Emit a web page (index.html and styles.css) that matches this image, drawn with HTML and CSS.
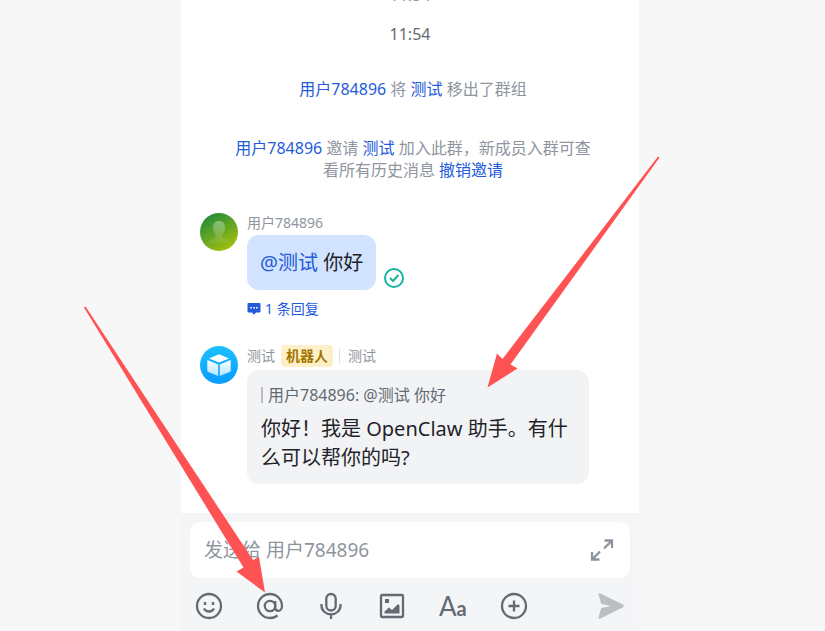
FILE: index.html
```html
<!DOCTYPE html>
<html lang="zh-CN">
<head>
    <meta charset="UTF-8">
    <meta name="viewport" content="width=device-width, initial-scale=1.0">
    <title>测试</title>
    <link rel="stylesheet" href="styles.css">
</head>
<body>
    <div class="chat">
        <main class="messages">
            <div class="earlier"><span>11:54</span></div>
            <time class="time">11:54</time>

            <p class="notice"><a href="#">用户784896</a> 将 <a href="#">测试</a> 移出了群组</p>
            <p class="notice"><a href="#">用户784896</a> 邀请 <a href="#">测试</a> 加入此群，新成员入群可查看所有历史消息 <a href="#">撤销邀请</a></p>

            <article class="message">
                <svg class="avatar" viewBox="0 0 38 38">
                    <defs>
                        <linearGradient id="green" x1="0.2" y1="0" x2="0.8" y2="1">
                            <stop offset="0" stop-color="#1f8a3a"/>
                            <stop offset="1" stop-color="#a8c20a"/>
                        </linearGradient>
                        <linearGradient id="person" x1="0" y1="0" x2="0" y2="1">
                            <stop offset="0" stop-color="#fff" stop-opacity="0.35"/>
                            <stop offset="1" stop-color="#fff" stop-opacity="0.06"/>
                        </linearGradient>
                    </defs>
                    <circle cx="19" cy="19" r="19" fill="url(#green)"/>
                    <path d="M19 8c4 0 6 2.500 6 6.500 0 3.500-1.200 5.500-2.700 7v3c2 1.600 6.500 2 8.700 5.500H7c2.200-3.500 6.700-3.900 8.700-5.500v-3c-1.500-1.500-2.700-3.500-2.700-7C13 10.500 15 8 19 8z" fill="url(#person)"/>
                </svg>
                <div class="content">
                    <div class="sender">用户784896</div>
                    <div class="row">
                        <div class="bubble mine"><a href="#">@测试</a> 你好</div>
                        <svg class="read" viewBox="0 0 22 22">
                            <circle cx="11" cy="10" r="9" fill="none" stroke="#12b5a0" stroke-width="2"/>
                            <path d="M7 10l3 3 5.500-6" fill="none" stroke="#12b5a0" stroke-width="2"/>
                        </svg>
                    </div>
                    <a class="replies" href="#">
                        <svg viewBox="0 0 14 14">
                            <path d="M1.500 1h11a1 1 0 0 1 1 1v7.500a1 1 0 0 1-1 1H9L7 12.800 5 10.500H1.500a1 1 0 0 1-1-1V2a1 1 0 0 1 1-1z" fill="#245bdb"/>
                            <path d="M3.300 5h1.600v1.600H3.300zM6.200 5h1.600v1.600H6.200zM9.100 5h1.600v1.600H9.100z" fill="#fff"/>
                        </svg>
                        1 条回复
                    </a>
                </div>
            </article>

            <article class="message">
                <svg class="avatar" viewBox="0 0 38 38">
                    <defs>
                        <linearGradient id="blue" x1="0" y1="0" x2="0" y2="1">
                            <stop offset="0" stop-color="#1cc0ff"/>
                            <stop offset="1" stop-color="#0a9bff"/>
                        </linearGradient>
                        <linearGradient id="side" x1="0" y1="0" x2="0" y2="1">
                            <stop offset="0" stop-color="#fff"/>
                            <stop offset="1" stop-color="#b5e6ff"/>
                        </linearGradient>
                    </defs>
                    <circle cx="19" cy="19" r="19" fill="url(#blue)"/>
                    <path d="M18.200 8.600a2 2 0 0 1 1.600 0L29 12.400l-10 4.100-10-4.100z" fill="#fff"/>
                    <path d="M7.300 14l10.900 4.500v11.500L8.500 26a2 2 0 0 1-1.200-1.800z" fill="url(#side)"/>
                    <path d="M30.700 14l-10.900 4.500v11.500l9.700-4a2 2 0 0 0 1.200-1.800z" fill="url(#side)"/>
                </svg>
                <div class="content">
                    <div class="sender">测试 <span class="tag">机器人</span> <span class="from">测试</span></div>
                    <div class="bubble reply">
                        <blockquote>用户784896: @测试 你好</blockquote>
                        <p>你好！我是 OpenClaw 助手。有什么可以帮你的吗?</p>
                    </div>
                </div>
            </article>
        </main>

        <footer class="composer">
            <div class="field">
                <input type="text" placeholder="发送给 用户784896" aria-label="发送给 用户784896">
                <button type="button" aria-label="展开">
                    <svg viewBox="0 0 28 28" fill="none" stroke="#8f959e" stroke-width="2.300">
                        <path d="M16.500 4.500h7.500V12M23.500 5l-7.500 7.500M4 16v7.500h7.500M4.500 23l7.500-7.500"/>
                    </svg>
                </button>
            </div>
            <div class="toolbar">
                <button type="button" aria-label="表情">
                    <svg viewBox="0 0 28 28" fill="none" stroke="#646a73" stroke-width="2.300">
                        <circle cx="14" cy="14" r="12"/>
                        <path d="M9 16.500c1.200 2.400 2.900 3 5 3s3.800-.6 5-3M10 10v3M18 10v3"/>
                    </svg>
                </button>
                <button type="button" aria-label="提及">
                    <svg viewBox="0 0 28 28" fill="none" stroke="#646a73" stroke-width="2.300">
                        <circle cx="14" cy="14" r="5.200"/>
                        <path d="M19.200 9v6.500c0 2 1 3.300 3 3.300s3.800-1.800 3.800-4.800A12 12 0 1 0 14 26c3 0 5.500-.8 7.500-2.600"/>
                    </svg>
                </button>
                <button type="button" aria-label="语音">
                    <svg viewBox="0 0 28 28" fill="none" stroke="#646a73" stroke-width="2.300">
                        <rect x="9.300" y="2" width="9.400" height="16.500" rx="4.700"/>
                        <path d="M4.500 12v1.500c0 5 4 8.800 9.500 8.800s9.500-3.800 9.500-8.800V12M14 22.300V27"/>
                    </svg>
                </button>
                <button type="button" aria-label="图片">
                    <svg viewBox="0 0 28 28">
                        <rect x="3" y="3" width="22" height="22" rx="1" fill="none" stroke="#646a73" stroke-width="2.300"/>
                        <path d="M7 7h4v4H7zM6.500 21.500v-2l4.500-4 3 2.500 6-6 1.500 1.500v8z" fill="#646a73"/>
                    </svg>
                </button>
                <button type="button" aria-label="字体" class="format">
                    <span class="big">A</span><span class="small">a</span>
                </button>
                <button type="button" aria-label="更多">
                    <svg viewBox="0 0 28 28" fill="none" stroke="#646a73" stroke-width="2.300">
                        <circle cx="14" cy="14" r="12"/>
                        <path d="M14 8.500v11M8.500 14h11"/>
                    </svg>
                </button>
                <button type="button" aria-label="发送" class="send">
                    <svg viewBox="0 0 28 28">
                        <path d="M3 1.200L26 12.500a1.500 1.500 0 0 1 0 2.700L3 26.800c-1 .3-1.800-.4-1.500-1.400l2.700-9.300L14 14 4.200 11.900 1.500 2.600C1.200 1.600 2 .900 3 1.200z" fill="#bbbfc4"/>
                    </svg>
                </button>
            </div>
        </footer>
    </div>

    <svg class="arrows" width="825" height="631" viewBox="0 0 825 631">
        <path d="M84 307.500l1.500-1L253 560l6-3 6 35.500-28.500-21 7-4z" fill="#ff5252"/>
        <path d="M658 156.500l1.500 1L510.500 364.500l7 4L487.500 387.500 497 353.500l5.500 5.500z" fill="#ff5252"/>
    </svg>
</body>
</html>
```
FILE: styles.css
```css
* {
    box-sizing: border-box;
}

body {
    margin: 0;
    min-height: 100vh;
    display: grid;
    grid-template-columns: 181fr 458fr 186fr;
    background: #f7f7f7;
    color: #1f2329;
    font-family: "Noto Sans", "Noto Sans CJK SC", sans-serif;
    font-size: 16px;
    line-height: 22px;
}

a {
    color: #245bdb;
    text-decoration: none;
}

button {
    padding: 0;
    border: none;
    background: none;
    cursor: pointer;
}

button svg {
    display: block;
    width: 28px;
    height: 28px;
}

.chat {
    grid-column: 2;
    min-height: 100vh;
    display: flex;
    flex-direction: column;
    background: white;
}

.messages {
    flex: 1;
    display: flex;
    flex-direction: column;
}

/* bottom edge of the previous line, scrolled out of view */
.earlier {
    display: flex;
    flex-direction: column;
    justify-content: flex-end;
    align-items: center;
    height: 6px;
    overflow: hidden;
    color: #8f959e;
    font-size: 16px;
}

.time {
    margin-top: 17px;
    text-align: center;
    color: #646a73;
}

.notice {
    margin: 33px 42px 0 48px;
    text-align: center;
    color: #8f959e;
}

.notice + .notice {
    margin-top: 37px;
}

.message {
    display: flex;
    gap: 9px;
    padding: 0 19px;
    margin-top: 32px;
}

.message + .message {
    margin-top: 26px;
}

.avatar {
    flex: none;
    width: 38px;
    height: 38px;
}

.sender {
    display: flex;
    align-items: center;
    gap: 6px;
    height: 20px;
    margin-bottom: 2px;
    font-size: 14px;
    color: #8f959e;
}

.tag {
    padding: 0 5px;
    border-radius: 4px;
    background: #fdf0c8;
    color: #a37500;
    font-weight: bold;
}

.from {
    padding-left: 8px;
    border-left: 1px solid #dee0e3;
    line-height: 14px;
}

.row {
    display: flex;
    align-items: flex-end;
    gap: 7px;
}

.bubble {
    max-width: 342px;
    border-radius: 12px;
    background: #f2f3f5;
    font-size: 20px;
    line-height: 29px;
}

.mine {
    padding: 13px;
    background: #d1e3ff;
}

.reply {
    margin-top: 4px;
    padding: 17px 14px 12px;
}

.read {
    width: 22px;
    height: 22px;
}

.bubble p {
    margin: 11px 0 0;
}

blockquote {
    margin: 0;
    padding-left: 5px;
    border-left: 2px solid #bbbfc4;
    color: #646a73;
    font-size: 16px;
    line-height: 16px;
}

.replies {
    display: flex;
    align-items: center;
    gap: 4px;
    margin-top: 8px;
    font-size: 14px;
}

.replies svg {
    width: 14px;
    height: 14px;
}

.composer {
    padding: 9px 9px 11px;
    background: #f4f5f7;
}

.field {
    display: flex;
    align-items: center;
    padding: 0 14px;
    height: 56px;
    border-radius: 10px;
    background: white;
}

.field input {
    flex: 1;
    min-width: 0;
    padding: 0;
    border: none;
    outline: none;
    background: none;
    font-family: inherit;
    font-size: 19px;
}

.field input::placeholder {
    color: #8f959e;
}

.toolbar {
    display: flex;
    gap: 33px;
    height: 28px;
    margin-top: 14px;
    padding: 0 5px;
}

.format {
    display: flex;
    align-items: baseline;
    width: 28px;
    color: #646a73;
    font-family: Lato, sans-serif;
    line-height: 28px;
}

.big {
    font-size: 26px;
}

.small {
    font-size: 20px;
    font-weight: bold;
}

.send {
    margin-left: auto;
}

.arrows {
    position: absolute;
    top: 0;
    left: 0;
    pointer-events: none;
}
```
